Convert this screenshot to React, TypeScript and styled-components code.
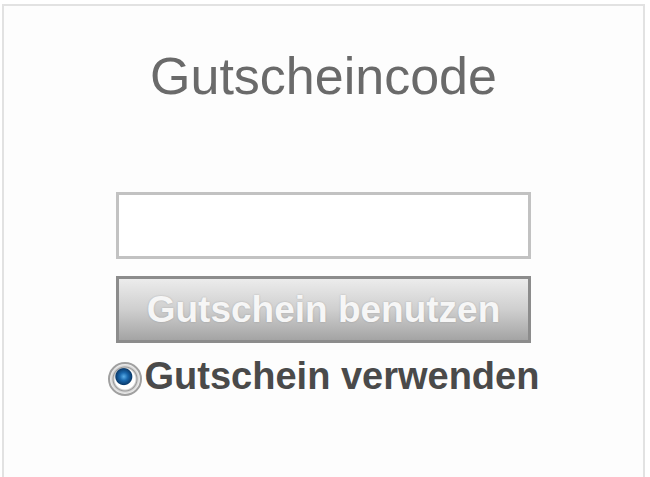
import React from "react";
import styled, { createGlobalStyle } from "styled-components";

const GlobalStyle = createGlobalStyle`
  html, body {
    margin: 0;
    padding: 0;
    background: #ffffff;
    font-family: "Liberation Sans", Arial, sans-serif;
  }
`;

const Page = styled.div`
  height: 477px;
  overflow: hidden;
  padding: 4px 5px 0 2px;
  box-sizing: border-box;
`;

const Panel = styled.section`
  height: 100%;
  border: 2px solid #e2e2e2;
  border-bottom: none;
  background: #fdfdfd;
  display: flex;
  flex-direction: column;
  align-items: center;
  padding-top: 40px;
  box-sizing: border-box;
`;

const Title = styled.h2`
  margin: 0;
  font-size: 52px;
  line-height: 60px;
  font-weight: 400;
  color: #6a6a6a;
`;

const Form = styled.form`
  margin-top: 86px;
  display: flex;
  flex-direction: column;
  align-items: center;
  gap: 17px;
`;

const CodeInput = styled.input`
  width: 415px;
  height: 67px;
  box-sizing: border-box;
  border: 3px solid #c2c2c2;
  background: #ffffff;
  outline: none;
`;

const SubmitButton = styled.button`
  width: 415px;
  height: 67px;
  box-sizing: border-box;
  border: 3px solid #8c8c8c;
  background: linear-gradient(to bottom, #ececec 0%, #cfcfcf 50%, #a4a4a4 100%);
  color: #f6f6f6;
  font-family: "Liberation Sans", Arial, sans-serif;
  font-weight: 700;
  font-size: 37px;
  padding: 0;
  text-shadow: 0 0 2px rgba(0, 0, 0, 0.2);
  cursor: pointer;
`;

const RadioRow = styled.label`
  display: flex;
  align-items: center;
  gap: 3px;
  margin-top: -5px;
  font-weight: 700;
  font-size: 38px;
  color: #4a4a4a;
  cursor: pointer;
`;

const Radio = styled.input`
  appearance: none;
  margin: 4px 0 0;
  width: 34px;
  height: 34px;
  border-radius: 50%;
  border: 2px solid #a0a0a0;
  box-sizing: border-box;
  background:
    radial-gradient(circle at 46% 42%, #5aaee8 0, #1a68ad 4px, #0b3d6f 8px, transparent 9px),
    radial-gradient(circle, #ffffff 0, #ffffff 10px, #9c9c9c 12px, #d4d4d4 13px, #f2f2f2 15px);
`;

export default function App() {
  return (
    <>
      <GlobalStyle />
      <Page>
        <Panel>
          <Title>Gutscheincode</Title>
          <Form onSubmit={(e) => e.preventDefault()}>
            <CodeInput type="text" />
            <SubmitButton type="submit">Gutschein benutzen</SubmitButton>
            <RadioRow>
              <Radio type="radio" name="gutschein" defaultChecked />
              Gutschein verwenden
            </RadioRow>
          </Form>
        </Panel>
      </Page>
    </>
  );
}
